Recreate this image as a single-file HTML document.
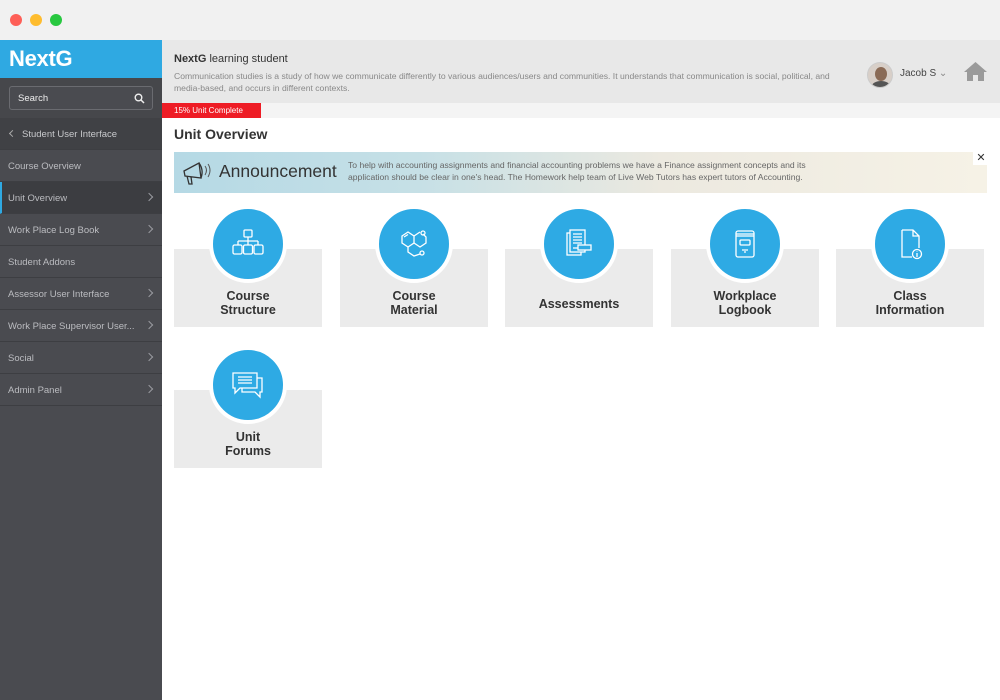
<!DOCTYPE html>
<html><head><meta charset="utf-8"><style>
*{margin:0;padding:0;box-sizing:border-box}
body{width:1000px;height:700px;overflow:hidden;font-family:"Liberation Sans",sans-serif;background:#fff;position:relative}
.chrome{position:absolute;left:0;top:0;width:1000px;height:40px;background:#f1f1f1}
.dot{position:absolute;top:14px;width:12px;height:12px;border-radius:50%}
.side{position:absolute;left:0;top:40px;width:162px;height:660px;background:#4a4b50}
.logo{height:38px;background:#2fa9e2;color:#fff;font-weight:bold;font-size:22px;padding:6px 0 0 9px;letter-spacing:-0.3px}
.searchwrap{height:40px;background:#46474b;padding:8px 9px}
.search{height:24px;border:1px solid #6a6b70;border-radius:3px;background:#4a4b50;color:#eee;font-size:9.5px;padding:6px 8px;position:relative}
.item{height:32px;border-bottom:1px solid #3d3e42;color:#bbbcc0;font-size:9.5px;padding:11px 0 0 8px;position:relative}
.item .ch{position:absolute;right:10px;top:12px;width:6px;height:6px;border-right:1px solid #9a9ba0;border-top:1px solid #9a9ba0;transform:rotate(45deg)}
.header{position:absolute;left:162px;top:40px;width:838px;height:63px;background:#e8e8e8}
.prog{position:absolute;left:162px;top:103px;width:838px;height:15px;background:#f4f4f4}
.card{position:absolute;width:148px;height:78px;background:#ebebeb;text-align:center;font-weight:bold;color:#333;font-size:12.5px;line-height:14px}
.circ{position:absolute;width:78px;height:78px;border-radius:50%;background:#2eaae4;border:4px solid #fff}
.circ svg{position:absolute;left:17px;top:17px}
</style></head><body>
<div class="chrome">
<div class="dot" style="left:10px;background:#fe5f57"></div>
<div class="dot" style="left:30px;background:#febc2e"></div>
<div class="dot" style="left:50px;background:#28c840"></div>
</div>
<div class="side">
<div class="logo">NextG</div>
<div class="searchwrap"><div class="search">Search
<svg style="position:absolute;right:7px;top:6px" width="11" height="11" viewBox="0 0 11 11"><circle cx="4.5" cy="4.5" r="3.3" fill="none" stroke="#eee" stroke-width="1.4"/><line x1="7" y1="7" x2="10" y2="10" stroke="#eee" stroke-width="1.5"/></svg></div></div>
<div class="item" style="background:#404145;padding-left:22px;color:#c8c9cc"><span style="position:absolute;left:10px;top:13px;width:5px;height:5px;border-left:1px solid #aaa;border-bottom:1px solid #aaa;transform:rotate(45deg)"></span>Student User Interface</div>
<div class="item">Course Overview</div>
<div class="item" style="background:#3c3d41;border-left:2px solid #2fa9e2;padding-left:6px">Unit Overview<span class="ch"></span></div>
<div class="item">Work Place Log Book<span class="ch"></span></div>
<div class="item">Student Addons</div>
<div class="item">Assessor User Interface<span class="ch"></span></div>
<div class="item">Work Place Supervisor User...<span class="ch"></span></div>
<div class="item">Social<span class="ch"></span></div>
<div class="item">Admin Panel<span class="ch"></span></div>
</div>
<div class="header">
<div style="position:absolute;left:12px;top:13px;font-size:11px;color:#333"><b>NextG</b> learning student</div>
<div style="position:absolute;left:12px;top:30px;width:676px;font-size:8.6px;line-height:12px;color:#888">Communication studies is a study of how we communicate differently to various audiences/users and communities. It understands that communication is social, political, and media-based, and occurs in different contexts.</div>
<div style="position:absolute;left:705px;top:22px;width:26px;height:26px;border-radius:50%;background:#d8cfc8;border:1px solid #ccc;overflow:hidden"><div style="position:absolute;left:7px;top:4px;width:12px;height:14px;border-radius:50%;background:#8a6a55"></div><div style="position:absolute;left:4px;top:18px;width:18px;height:10px;border-radius:50% 50% 0 0;background:#555"></div></div>
<div style="position:absolute;left:738px;top:28px;font-size:10px;color:#444">Jacob S <span style="color:#888">&#8964;</span></div>
<svg style="position:absolute;left:801px;top:21px" width="25" height="21" viewBox="0 0 25 21"><path d="M12.5 1 L1 11 L4 11 L4 20 L10 20 L10 14 L15 14 L15 20 L21 20 L21 11 L24 11 Z" fill="#9a9a9a"/></svg>
</div>
<div class="prog"><div style="width:99px;height:15px;background:#ee1c25;color:#fff;font-size:8px;padding:3px 0 0 12px">15% Unit Complete</div></div>
<div style="position:absolute;left:174px;top:126px;font-size:14px;font-weight:bold;color:#333">Unit Overview</div>
<div style="position:absolute;left:174px;top:152px;width:813px;height:41px;background:linear-gradient(90deg,#b5d9e5 0%,#c6e0e6 30%,#ece9e0 60%,#f6f2e6 100%)">
<svg style="position:absolute;left:8px;top:8px" width="32" height="26" viewBox="0 0 32 26"><path d="M2 11 L17 3 L19 18 L3 16 Z M5 16 L7 24 L10 24 L9 17 M17 3 Q22 10 19 18" fill="none" stroke="#333" stroke-width="1.3"/><path d="M23 6 Q26 10 23 15 M26 4 Q30 10 26 17" fill="none" stroke="#555" stroke-width="1"/></svg>
<div style="position:absolute;left:45px;top:9px;font-size:17.5px;color:#333">Announcement</div>
<div style="position:absolute;left:174px;top:7px;font-size:8.6px;line-height:12px;color:#666;width:490px">To help with accounting assignments and financial accounting problems we have a Finance assignment concepts and its application should be clear in one's head. The Homework help team of Live Web Tutors has expert tutors of Accounting.</div>
<div style="position:absolute;right:-2px;top:-1px;width:16px;height:14px;background:#fff;font-size:11px;text-align:center;color:#333">✕</div>
</div>

<div class="card" style="left:174px;top:249px"><div style="padding-top:40px">Course<br>Structure</div></div>
<div class="card" style="left:340px;top:249px"><div style="padding-top:40px">Course<br>Material</div></div>
<div class="card" style="left:505px;top:249px"><div style="padding-top:48px">Assessments</div></div>
<div class="card" style="left:671px;top:249px"><div style="padding-top:40px">Workplace<br>Logbook</div></div>
<div class="card" style="left:836px;top:249px"><div style="padding-top:40px">Class<br>Information</div></div>
<div class="card" style="left:174px;top:390px"><div style="padding-top:40px">Unit<br>Forums</div></div>

<div class="circ" style="left:209px;top:205px"><svg width="36" height="36" viewBox="0 0 36 36" fill="none" stroke="#fff" stroke-width="1.3"><rect x="14" y="4" width="8" height="7" rx="1"/><path d="M18 11V15M8 15H28M8 15V19M18 15V19M28 15V19"/><rect x="3" y="19" width="9" height="9" rx="1.5"/><rect x="13.5" y="19" width="9" height="9" rx="1.5"/><rect x="24" y="19" width="9" height="9" rx="1.5"/></svg></div>
<div class="circ" style="left:375px;top:205px"><svg width="36" height="36" viewBox="0 0 36 36" fill="none" stroke="#fff" stroke-width="1.3"><path d="M6 10L12 6L18 10V17L12 21L6 17Z M8 11L12 8.5"/><path d="M18 10L24 6M18 17L24 21L30 17V11L27 8"/><circle cx="27" cy="7" r="2"/><path d="M12 21V26L18 30L24 28"/><circle cx="26" cy="27" r="2"/></svg></div>
<div class="circ" style="left:540px;top:205px"><svg width="36" height="36" viewBox="0 0 36 36" fill="none" stroke="#fff" stroke-width="1.3"><rect x="6" y="7" width="14" height="22"/><rect x="9" y="4" width="15" height="22" fill="#2eaae4"/><path d="M12 8H21M12 11H21M12 14H21M12 17H21"/><rect x="17" y="19" width="13" height="5" fill="#2eaae4"/><path d="M12 22H17"/></svg></div>
<div class="circ" style="left:706px;top:205px"><svg width="36" height="36" viewBox="0 0 36 36" fill="none" stroke="#fff" stroke-width="1.3"><rect x="9" y="5" width="18" height="26" rx="2"/><path d="M9 8H27M9 10H27"/><rect x="13" y="14" width="10" height="5" rx="1"/><path d="M15 24H21M17 26H19"/></svg></div>
<div class="circ" style="left:871px;top:205px"><svg width="36" height="36" viewBox="0 0 36 36" fill="none" stroke="#fff" stroke-width="1.3"><path d="M10 4H21L27 10V22M21 4V10H27M10 4V31H20"/><circle cx="25" cy="28" r="4.5"/><path d="M25 27V31M25 25.5V26" /></svg></div>
<div class="circ" style="left:209px;top:346px"><svg width="36" height="36" viewBox="0 0 36 36" fill="none" stroke="#fff" stroke-width="1.3"><path d="M3 6H27V21H10L5 26V21H3Z"/><path d="M8 10H22M8 13H22M8 16H22"/><path d="M27 11H32V25H30V30L25 25H12V21"/></svg></div>
</body></html>
